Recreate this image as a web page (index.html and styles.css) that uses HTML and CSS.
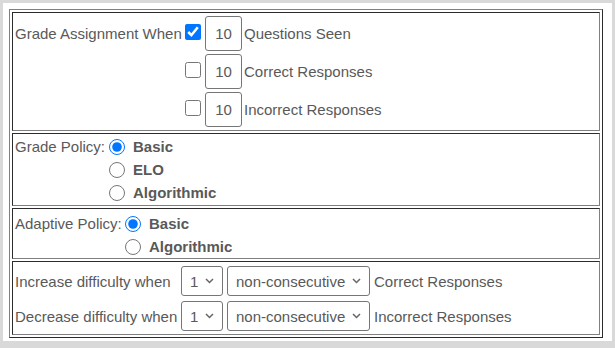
FILE: index.html
```html
<!DOCTYPE html>
<html>
<head>
<meta charset="utf-8">
<link rel="stylesheet" href="styles.css">
</head>
<body>
<div class="page">
  <table class="settings">
    <tr>
      <td class="cell cell-assign">
        <div class="assign">
          <span class="lbl">Grade Assignment When</span>
          <input type="checkbox" class="chk" checked>
          <input type="text" class="num" value="10">
          <span class="lbl after">Questions Seen</span>

          <span></span>
          <input type="checkbox" class="chk">
          <input type="text" class="num" value="10">
          <span class="lbl after">Correct Responses</span>

          <span></span>
          <input type="checkbox" class="chk">
          <input type="text" class="num" value="10">
          <span class="lbl after">Incorrect Responses</span>
        </div>
      </td>
    </tr>
    <tr>
      <td class="cell cell-grade">
        <div class="policy grade">
          <span class="lbl">Grade Policy:</span>
          <input type="radio" name="gp" class="rad" checked>
          <span class="opt">Basic</span>
          <span></span>
          <input type="radio" name="gp" class="rad">
          <span class="opt">ELO</span>
          <span></span>
          <input type="radio" name="gp" class="rad">
          <span class="opt">Algorithmic</span>
        </div>
      </td>
    </tr>
    <tr>
      <td class="cell cell-adaptive">
        <div class="policy adaptive">
          <span class="lbl">Adaptive Policy:</span>
          <input type="radio" name="ap" class="rad" checked>
          <span class="opt">Basic</span>
          <span></span>
          <input type="radio" name="ap" class="rad">
          <span class="opt">Algorithmic</span>
        </div>
      </td>
    </tr>
    <tr>
      <td class="cell cell-diff">
        <div class="diff">
          <span class="lbl">Increase difficulty when</span>
          <select class="sel sel-n"><option>1</option><option>2</option><option>3</option></select>
          <select class="sel sel-mode"><option>non-consecutive</option><option>consecutive</option></select>
          <span class="lbl">Correct Responses</span>

          <span class="lbl">Decrease difficulty when</span>
          <select class="sel sel-n"><option>1</option><option>2</option><option>3</option></select>
          <select class="sel sel-mode"><option>non-consecutive</option><option>consecutive</option></select>
          <span class="lbl">Incorrect Responses</span>
        </div>
      </td>
    </tr>
  </table>
</div>
</body>
</html>
```
FILE: styles.css
```css
html, body {
  margin: 0;
  padding: 0;
  background: #d9d9d9;
}
body {
  font-family: "Liberation Sans", Arial, sans-serif;
  font-size: 15px;
  color: #595959;
}
.page {
  margin: 3px;
  width: 609px;
  height: 338px;
  box-sizing: border-box;
  background: #fff;
  padding: 6px 0 0 6px;
}
.settings {
  width: 594px;
  border: 1px outset gray;
  border-spacing: 2px;
}
.cell {
  border: 1px inset gray;
  padding: 0;
  vertical-align: top;
}
.lbl {
  white-space: nowrap;
}
.assign {
  display: grid;
  grid-template-columns: 170px 20px 39px auto;
  grid-auto-rows: 35px;
  row-gap: 3px;
  align-items: center;
  padding: 3px 0 3px 2px;
}
.chk {
  width: 16px;
  height: 16px;
  margin: 0 0 4px 0;
}
.num {
  width: 37px;
  height: 35px;
  box-sizing: border-box;
  border: 1px solid #767676;
  border-radius: 3px;
  padding: 0;
  text-align: center;
  font-family: inherit;
  font-size: 15px;
  color: #595959;
  background: #fff;
}
.policy {
  display: grid;
  grid-auto-rows: 23px;
  align-items: center;
  padding-left: 2px;
}
.grade {
  grid-template-columns: 94px 24px auto;
  padding-top: 1px;
  padding-bottom: 1px;
}
.adaptive {
  grid-template-columns: 110px 24px auto;
  padding-top: 3px;
}
.rad {
  width: 16px;
  height: 16px;
  margin: 0;
}
.opt {
  font-weight: bold;
}
.diff {
  display: grid;
  grid-template-columns: 162px 42px 143px auto;
  column-gap: 4px;
  grid-auto-rows: 30px;
  row-gap: 5px;
  align-items: center;
  padding: 4px 0 3px 2px;
}
.sel {
  -webkit-appearance: none;
  appearance: none;
  height: 30px;
  box-sizing: border-box;
  font-family: inherit;
  font-size: 15px;
  color: #595959;
  background-color: #fff;
  background-image: url("data:image/svg+xml;utf8,<svg xmlns='http://www.w3.org/2000/svg' width='9' height='6' viewBox='0 0 9 6'><path d='M1 1 L4.5 4.5 L8 1' fill='none' stroke='%23666' stroke-width='1.5'/></svg>");
  background-repeat: no-repeat;
  background-position: right 8px center;
  background-size: 9px 6px;
  border: 1px solid #767676;
  border-radius: 3px;
  padding: 0 0 0 8px;
}
.sel-n { width: 42px; }
.sel-mode { width: 143px; }
```
